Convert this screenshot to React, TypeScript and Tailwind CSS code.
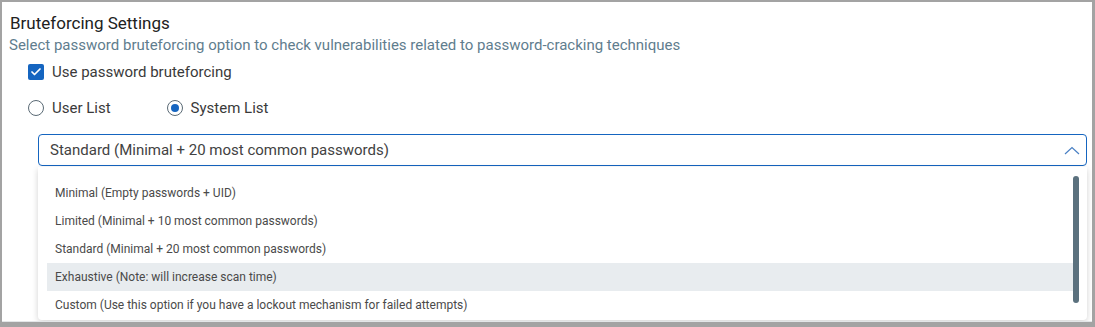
import { Check } from "lucide-react";

const OPTIONS = [
  "Minimal (Empty passwords + UID)",
  "Limited (Minimal + 10 most common passwords)",
  "Standard (Minimal + 20 most common passwords)",
  "Exhaustive (Note: will increase scan time)",
  "Custom (Use this option if you have a lockout mechanism for failed attempts)",
];

export default function App() {
  return (
    <div
      className="h-[327px] w-[1095px] bg-[#a3a3a3] pb-[5px] pl-[2px] pr-[3px] pt-[2px]"
      style={{ fontFamily: "Roboto, 'Liberation Sans', sans-serif" }}
    >
      <div className="relative h-full w-full overflow-hidden border-b border-[#e3e6e8] bg-white">
        {/* header */}
        <div className="pl-[8px] pt-[9px]">
          <div className="text-[17px] leading-[24px] text-[#212121]">Bruteforcing Settings</div>
          <div className="-ml-[1px] text-[15px] leading-[20px] text-[#5f7d8e]">
            Select password bruteforcing option to check vulnerabilities related to password-cracking techniques
          </div>
        </div>

        {/* checkbox */}
        <label className="ml-[26px] mt-[9px] flex h-[16px] items-center gap-[8px]">
          <span className="flex size-[16px] items-center justify-center rounded-[2px] bg-[#1565c0]">
            <Check className="size-[12px] text-white" strokeWidth={3.5} />
          </span>
          <span className="text-[15px] text-[#3a3a3a]">Use password bruteforcing</span>
        </label>

        {/* radios */}
        <div className="ml-[26px] mt-[20px] flex h-[16px] items-center">
          <label className="flex items-center gap-[8px]">
            <span className="size-[16px] rounded-full border border-[#5a6a75] bg-white" />
            <span className="text-[15px] text-[#3a3a3a]">User List</span>
          </label>
          <label className="ml-[56px] flex items-center gap-[8px]">
            <span className="flex size-[16px] items-center justify-center rounded-full border border-[#5a6a75] bg-white">
              <span className="size-[8px] rounded-full bg-[#1565c0]" />
            </span>
            <span className="text-[15px] text-[#3a3a3a]">System List</span>
          </label>
        </div>

        {/* select */}
        <div className="ml-[36px] mr-[5px] mt-[18px] flex h-[32px] items-center justify-between rounded-[4px] border-[1.5px] border-[#1565c0] pl-[11px] pr-[6px]">
          <span className="text-[15px] text-[#424242]">Standard (Minimal + 20 most common passwords)</span>
          <svg width="16" height="9" viewBox="0 0 16 9" className="mt-[1px]">
            <path d="M1 8 L8 1.5 L15 8" fill="none" stroke="#4a80c4" strokeWidth="1.2" />
          </svg>
        </div>

        {/* dropdown menu (overlay) */}
        <div className="absolute left-[36px] right-[5px] top-[165px] h-[153px] rounded-b-[4px] bg-white shadow-[0_2px_6px_rgba(0,0,0,0.18)]">
          <div className="flex h-full pt-[12px]">
            <div className="flex-1 pl-[9px]">
              {OPTIONS.map((o, i) => (
                <div
                  key={o}
                  className={
                    "flex h-[28px] items-center pl-[8px] text-[12px] text-[#4a4a4a] " +
                    (i === 3 ? "bg-[#e8ecef]" : "")
                  }
                >
                  {o}
                </div>
              ))}
            </div>
            <div className="mr-[8px] mt-[-3px] h-[127px] w-[6px] rounded-full bg-[#5b717e]" />
          </div>
        </div>
      </div>
    </div>
  );
}
